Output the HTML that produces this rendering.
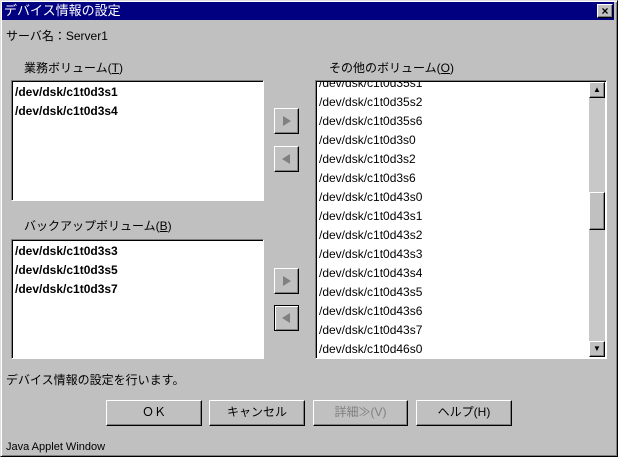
<!DOCTYPE html>
<html><head><meta charset="utf-8"><style>
*{margin:0;padding:0;box-sizing:border-box}
body{width:618px;height:457px;background:#c0c0c0;font-family:"Liberation Sans","Noto Sans CJK JP",sans-serif;font-size:12px;color:#000;position:relative;overflow:hidden}
.win{position:absolute;left:0;top:0;width:618px;height:457px;border:1px solid;border-color:#dfdfdf #000 #000 #dfdfdf;box-shadow:inset 1px 1px #fff,inset -1px -1px #808080}
.title{position:absolute;left:2px;top:2px;width:612px;height:18px;background:#000080;color:#fff;font-size:13px;line-height:18px;padding-left:2px}
.close{position:absolute;left:597px;top:4px;width:16px;height:14px;background:#c0c0c0;border:1px solid;border-color:#fff #000 #000 #fff;box-shadow:inset -1px -1px #808080;color:#000;font-size:12px;line-height:12px;text-align:center;font-weight:bold}
.t{position:absolute;white-space:nowrap}
.list{position:absolute;background:#fff;border:1px solid;border-color:#808080 #fff #fff #808080;box-shadow:inset 1px 1px #000;overflow:hidden}
.list div{height:19px;line-height:19px;padding-left:3px;white-space:nowrap}
.b div{font-weight:bold}
.ab{position:absolute;width:25px;height:26px;background:#c0c0c0;border:1px solid;border-color:#fff #000 #000 #fff;box-shadow:inset -1px -1px #808080}
.btn{position:absolute;top:400px;height:26px;background:#c0c0c0;border:1px solid;border-color:#fff #000 #000 #fff;box-shadow:inset -1px -1px #808080;text-align:center;line-height:23px}
</style></head><body>
<div class="win"></div>
<div class="title">デバイス情報の設定</div>
<div class="close">×</div>
<div class="t" style="left:6px;top:27px">サーバ名：Server1</div>
<div class="t" style="left:24px;top:59px">業務ボリューム(<u>T</u>)</div>
<div class="t" style="left:329px;top:59px">その他のボリューム(<u>O</u>)</div>
<div class="t" style="left:24px;top:217px">バックアップボリューム(<u>B</u>)</div>
<div class="list b" style="left:11px;top:80px;width:253px;height:121px;padding-top:2px"><div>/dev/dsk/c1t0d3s1</div><div>/dev/dsk/c1t0d3s4</div></div>
<div class="list b" style="left:11px;top:239px;width:253px;height:120px;padding-top:2px"><div>/dev/dsk/c1t0d3s3</div><div>/dev/dsk/c1t0d3s5</div><div>/dev/dsk/c1t0d3s7</div></div>
<div class="list" style="left:315px;top:80px;width:292px;height:279px">
<div style="margin-top:-7px">/dev/dsk/c1t0d35s1</div><div>/dev/dsk/c1t0d35s2</div><div>/dev/dsk/c1t0d35s6</div><div>/dev/dsk/c1t0d3s0</div><div>/dev/dsk/c1t0d3s2</div><div>/dev/dsk/c1t0d3s6</div><div>/dev/dsk/c1t0d43s0</div><div>/dev/dsk/c1t0d43s1</div><div>/dev/dsk/c1t0d43s2</div><div>/dev/dsk/c1t0d43s3</div><div>/dev/dsk/c1t0d43s4</div><div>/dev/dsk/c1t0d43s5</div><div>/dev/dsk/c1t0d43s6</div><div>/dev/dsk/c1t0d43s7</div><div>/dev/dsk/c1t0d46s0</div>
</div>
<div style="position:absolute;left:589px;top:82px;width:16px;height:275px;background:#c8c8c8"></div>
<div class="ab" style="left:589px;top:82px;width:16px;height:16px;font-size:8px;text-align:center;line-height:13px">▲</div>
<div class="ab" style="left:589px;top:192px;width:16px;height:38px"></div>
<div class="ab" style="left:589px;top:341px;width:16px;height:16px;font-size:8px;text-align:center;line-height:13px">▼</div>
<div class="ab" style="left:274px;top:108px"><svg width="23" height="24"><path d="M8 7 L16 12 L8 17Z" fill="#808080"/></svg></div>
<div class="ab" style="left:274px;top:146px"><svg width="23" height="24"><path d="M15 7 L7 12 L15 17Z" fill="#808080"/></svg></div>
<div class="ab" style="left:274px;top:268px"><svg width="23" height="24"><path d="M8 7 L16 12 L8 17Z" fill="#808080"/></svg></div>
<div class="ab" style="left:274px;top:305px;border:1px solid #000;box-shadow:inset 1px 1px #fff,inset -1px -1px #808080"><svg width="23" height="24"><path d="M15 7 L7 12 L15 17Z" fill="#808080"/></svg></div>
<div class="t" style="left:6px;top:371px">デバイス情報の設定を行います。</div>
<div class="btn" style="left:106px;width:96px">ＯＫ</div>
<div class="btn" style="left:209px;width:96px">キャンセル</div>
<div class="btn" style="left:313px;width:95px;color:#808080">詳細≫(V)</div>
<div class="btn" style="left:416px;width:96px">ヘルプ(H)</div>
<div class="t" style="left:6px;top:441px;font-size:11px">Java Applet Window</div>
</body></html>
